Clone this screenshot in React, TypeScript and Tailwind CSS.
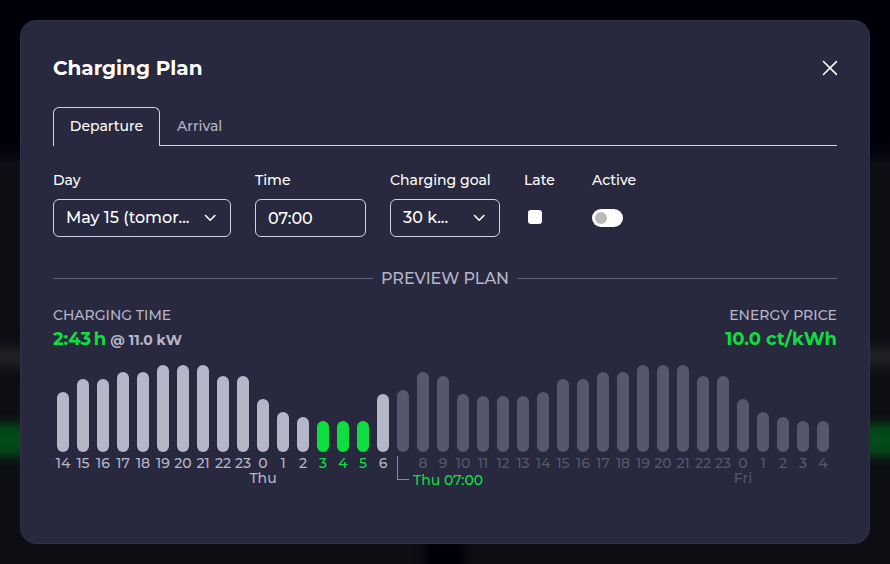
import React from "react";

type Slot = { hour: string; height: number; day?: string; state: "idle" | "active" | "after" };

const idle = (hour: number, height: number, day?: string): Slot => ({ hour: String(hour), height, day, state: "idle" });
const active = (hour: number, height: number): Slot => ({ hour: String(hour), height, state: "active" });
const after = (hour: number | "", height: number, day?: string): Slot => ({ hour: String(hour), height, day, state: "after" });

const slots: Slot[] = [
  idle(14, 60), idle(15, 73), idle(16, 73), idle(17, 80), idle(18, 80),
  idle(19, 87), idle(20, 87), idle(21, 87), idle(22, 76), idle(23, 76),
  idle(0, 53, "Thu"), idle(1, 40), idle(2, 35),
  active(3, 31), active(4, 31), active(5, 31),
  idle(6, 58),
  after("", 62), after(8, 80), after(9, 76), after(10, 58), after(11, 56),
  after(12, 56), after(13, 56), after(14, 60), after(15, 73), after(16, 73),
  after(17, 80), after(18, 80), after(19, 87), after(20, 87), after(21, 87),
  after(22, 76), after(23, 76), after(0, 53, "Fri"), after(1, 40),
  after(2, 35), after(3, 31), after(4, 31),
];

const barColor = { idle: "bg-[#b5b6c8]", active: "bg-[#0fde41]", after: "bg-[#56576b]" };
const textColor = { idle: "text-[#b5b6c8]", active: "text-[#0fde41]", after: "text-[#56576b]" };

function Chevron() {
  return (
    <svg className="pointer-events-none absolute right-3 top-[11px] size-4" viewBox="0 0 16 16" fill="none" stroke="white" strokeWidth="1.6" strokeLinecap="round" strokeLinejoin="round" aria-hidden="true">
      <path d="M2.5 5.5l4.7 4.7 4.7-4.7" />
    </svg>
  );
}

const field = "block h-[38px] w-full appearance-none rounded-md border border-[#d2d1ea] bg-transparent px-3 text-base font-medium text-white outline-none";

function Slots() {
  return (
    <div className="relative mt-[13px] flex">
      {slots.map((slot, i) => (
        <div key={i} className="flex w-5 shrink-0 flex-col items-center">
          <div className="flex h-[87px] items-end">
            <div className={`w-3 rounded-full ${barColor[slot.state]}`} style={{ height: slot.height }} />
          </div>
          <div className={`mt-1 h-[45px] text-center text-sm/[15px] font-medium ${textColor[slot.state]}`}>
            <div className="h-[15px]">{slot.hour}</div>
            {slot.day && <div>{slot.day}</div>}
          </div>
        </div>
      ))}
      <div className="absolute left-[344px] top-[91px] flex items-end gap-1 text-[#0fde41]">
        <div className="h-6 w-3 border-b border-l border-[#0fde41]" />
        <div className="-mb-2 whitespace-nowrap text-sm/4 font-medium">Thu 07:00</div>
      </div>
    </div>
  );
}

export default function App() {
  return (
    <div className="relative isolate min-h-screen overflow-hidden bg-[#0d0e13] p-5 font-['Montserrat','Inter',sans-serif] text-white">
      <div className="absolute inset-x-0 top-0 -z-10 h-[164px] bg-linear-to-b from-[#010009] from-85% to-[#0d0e13]" />
      <div className="absolute -inset-x-5 top-[348px] -z-10 h-[18px] bg-[#232326] blur-[6px]" />
      <div className="absolute -inset-x-5 top-[424px] -z-10 h-8 bg-[#034b18] blur-[6px]" />
      <div className="absolute -bottom-4 left-1/2 -z-10 h-12 w-10 -translate-x-1/2 bg-[#010009] blur-[5px]" />

      <main role="dialog" aria-labelledby="title" className="min-h-[524px] rounded-2xl border border-[#303145] bg-[#28293e] px-8 pb-8 pt-[31px]">
        <header className="flex h-8 items-center justify-between">
          <h1 id="title" className="text-xl font-bold">Charging Plan</h1>
          <button type="button" aria-label="Close" className="size-4">
            <svg className="size-4" viewBox="0 0 16 16" stroke="white" strokeWidth="1.6" strokeLinecap="round">
              <path d="M2.5 1.5l13 13M15.5 1.5l-13 13" />
            </svg>
          </button>
        </header>

        <div role="tablist" className="mt-[23px] flex text-sm font-medium">
          <button type="button" role="tab" aria-selected="true" className="h-[39px] w-[107px] rounded-t-md border border-b-0 border-[#d2d1ea] pb-0.5">Departure</button>
          <button type="button" role="tab" aria-selected="false" className="h-[39px] border-b border-[#d2d1ea] px-[17px] text-[#b5b6c8]">Arrival</button>
          <div className="grow border-b border-[#d2d1ea]" />
        </div>

        <form className="mt-6 flex gap-6 text-sm/5 font-medium">
          <div className="w-[178px]">
            <label htmlFor="day">Day</label>
            <div className="relative mt-[9px]">
              <select id="day" className={field}><option>May 15 (tomor...</option></select>
              <Chevron />
            </div>
          </div>
          <div className="w-[111px]">
            <label htmlFor="time">Time</label>
            <div className="mt-[9px]"><input id="time" type="text" defaultValue="07:00" className={field} /></div>
          </div>
          <div className="w-[110px]">
            <label htmlFor="goal" className="whitespace-nowrap">Charging goal</label>
            <div className="relative mt-[9px]">
              <select id="goal" className={field}><option>30 k...</option></select>
              <Chevron />
            </div>
          </div>
          <div className="w-11">
            <label htmlFor="late">Late</label>
            <div className="mt-5 pl-1"><input id="late" type="checkbox" className="block size-3.5 appearance-none rounded-[3px] bg-white" /></div>
          </div>
          <div>
            <label htmlFor="active">Active</label>
            <div className="relative mt-[19px] w-[31px]">
              <input id="active" type="checkbox" role="switch" className="block h-[18px] w-full appearance-none rounded-full bg-white" />
              <span className="pointer-events-none absolute left-[3px] top-[3px] size-3 rounded-full bg-[#bababa]" />
            </div>
          </div>
        </form>

        <h2 className="mt-[29px] flex items-center gap-2 text-base/6 font-medium text-[#b5b6c8]">
          <span className="h-px grow bg-[#62637a]" />
          <span className="pt-px">PREVIEW PLAN</span>
          <span className="h-px grow bg-[#62637a]" />
        </h2>

        <div className="mt-[14px] flex justify-between text-sm/5 font-medium text-[#b5b6c8]">
          <div>
            <div>CHARGING TIME</div>
            <div className="mt-0.5 font-bold leading-6"><span className="text-lg/6 text-[#0fde41]">2:43&#8201;h</span> @ 11.0 kW</div>
          </div>
          <div className="text-right">
            <div>ENERGY PRICE</div>
            <div className="mt-0.5 text-lg/6 font-bold text-[#0fde41]">10.0 ct/kWh</div>
          </div>
        </div>

        <Slots />
      </main>
    </div>
  );
}
